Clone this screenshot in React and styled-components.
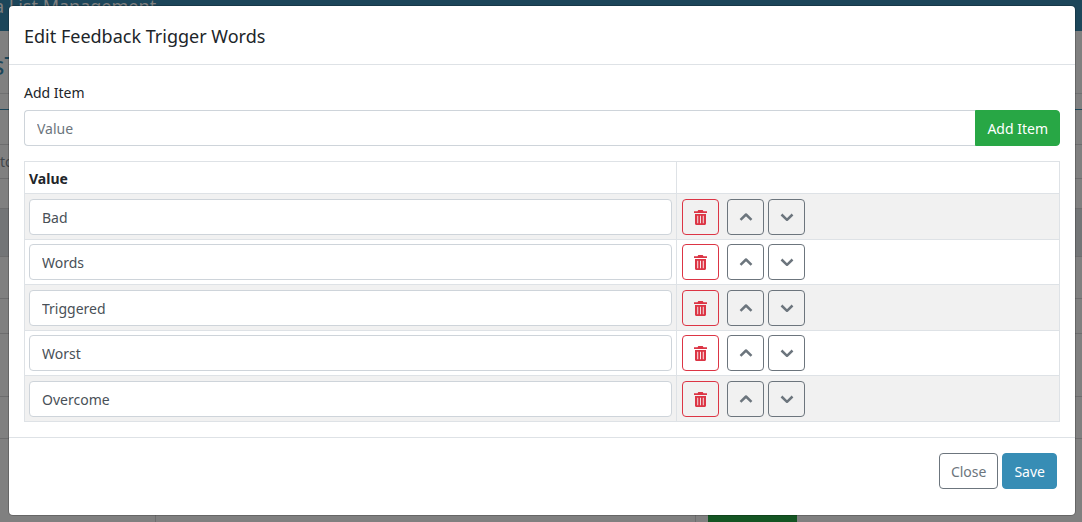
import React, { useState } from "react";
import styled, { createGlobalStyle, css } from "styled-components";

const Global = createGlobalStyle`
  *, *::before, *::after { box-sizing: border-box; }
  body {
    margin: 0;
    background: #808080;
    color: #212529;
    font-family: "Segoe UI", "Noto Sans", "Open Sans", sans-serif;
    font-size: 14px;
    line-height: 21px;
  }
  button, input { font: inherit; }
`;

const Stage = styled.div`
  position: relative;
  min-height: 100vh;
  overflow: hidden;
`;

const Backdrop = styled.div`
  position: absolute;
  inset: 0;
  overflow: hidden;
`;

const TopBar = styled.div`
  height: 31px;
  background: #1c465a;
  color: #808080;
  font-size: 18px;
  line-height: 12px;
  text-indent: -6px;
  white-space: nowrap;
`;

const PageTitle = styled.div`
  height: 63px;
  padding-top: 16px;
  border-bottom: 1px solid #6f7071;
  color: #1c465a;
  font-size: 26px;
  line-height: 36px;
  text-indent: -8px;
`;

const PageRow = styled.div`
  height: ${(p) => p.$height}px;
  border-bottom: 1px solid ${(p) => p.$line || "#6d6d6e"};
  background: ${(p) => p.$fill || "transparent"};
  color: #40464b;
  line-height: ${(p) => p.$height}px;
`;

const PageFoot = styled.div`
  display: flex;
  height: 84px;
  padding: 0 285px 0 155px;
`;

const FootCell = styled.div`
  flex: 1;
  border: 1px solid #6d6d6e;
  border-width: 0 1px;
`;

const FootAction = styled.div`
  width: 89px;
  margin-left: 12px;
  background: #145523;
`;

const Dialog = styled.section`
  position: relative;
  margin: 6px 7px 7px 9px;
  background: #fff;
  border-radius: 4px;
  box-shadow: 0 0 0 1px rgba(0, 0, 0, 0.2);
`;

const Header = styled.header`
  padding: 16px 15px 14px;
  border-bottom: 1px solid #dee2e6;
`;

const Title = styled.h1`
  margin: 0;
  font-size: 18px;
  font-weight: 400;
  line-height: 28px;
`;

const Body = styled.div`
  padding: 15px;
`;

const Label = styled.label`
  display: block;
  margin: 2px 0 7px;
`;

const TextBox = styled.input`
  display: block;
  width: 100%;
  min-width: 0;
  height: 36px;
  padding: 6px 12px;
  border: 1px solid #ced4da;
  border-radius: 4px;
  background: #fff;
  color: #495057;
  &::placeholder { color: #6c757d; opacity: 1; }
`;

const InputGroup = styled.form`
  display: flex;
  margin-bottom: 15px;
  ${TextBox} { flex: 1; border-right: 0; border-radius: 4px 0 0 4px; }
`;

const tones = {
  success: css`border-color: #28a745; background: #28a745; color: #fff;`,
  primary: css`border-color: #378db5; background: #378db5; color: #fff;`,
  secondary: css`border-color: #6c757d; color: #6c757d;`,
  danger: css`border-color: #dc3545; color: #dc3545;`,
};

const Button = styled.button`
  height: 36px;
  padding: 0 11px;
  border: 1px solid transparent;
  border-radius: 4px;
  background: transparent;
  white-space: nowrap;
  cursor: pointer;
  ${(p) => tones[p.$tone]}
`;

const AddButton = styled(Button)`
  border-radius: 0 4px 4px 0;
`;

const IconButton = styled(Button)`
  display: flex;
  align-items: center;
  justify-content: center;
  width: 37px;
  padding: 0;
  svg { display: block; }
`;

const Table = styled.table`
  width: 100%;
  border-collapse: collapse;
  th, td { border: 1px solid #dee2e6; text-align: left; }
  th { height: 32px; padding: 5px 4px 3px; font-weight: 700; }
  th:last-child { width: 37%; }
  td { padding: 4px; }
  tbody tr:nth-child(odd) { background: #f1f1f1; }
  tbody tr:nth-child(odd) td { padding-top: 5px; }
`;

const Actions = styled.div`
  display: flex;
  gap: 4px;
  padding-left: 1px;
  ${IconButton}:first-child { margin-right: 4px; }
`;

const Footer = styled.footer`
  display: flex;
  justify-content: flex-end;
  gap: 4px;
  padding: 15px 18px 26px;
  border-top: 1px solid #dee2e6;
`;

const TrashIcon = () => (
  <svg width="13" height="15" viewBox="0 0 13 15" aria-hidden="true">
    <path
      fill="currentColor"
      fillRule="evenodd"
      d="M0 1.300h3.500L4.300 0h4.400l.8 1.300H13v1.800H0zM1 4h11v9.500c0 .9-.6 1.500-1.500 1.500h-8C1.600 15 1 14.400 1 13.500zM3.300 5.700v7.600h.9V5.700zM6.050 5.700v7.600h.9V5.700zM8.800 5.700v7.600h.9V5.700z"
    />
  </svg>
);

const Chevron = ({ down }) => (
  <svg width="14" height="10" viewBox="0 0 14 10" fill="none" aria-hidden="true">
    <path
      d={down ? "M1.500 2.500L7 7.800L12.500 2.500" : "M1.500 7.800L7 2.500L12.500 7.800"}
      stroke="currentColor"
      strokeWidth="2.500"
      strokeLinejoin="round"
    />
  </svg>
);

export default function App() {
  const [items, setItems] = useState(["Bad", "Words", "Triggered", "Worst", "Overcome"]);
  const [draft, setDraft] = useState("");

  const add = (e) => {
    e.preventDefault();
    if (draft.trim()) setItems([...items, draft.trim()]);
    setDraft("");
  };
  const edit = (i, value) => setItems(items.map((v, n) => (n === i ? value : v)));
  const remove = (i) => setItems(items.filter((_, n) => n !== i));
  const move = (i, to) => {
    if (to < 0 || to >= items.length) return;
    const next = [...items];
    [next[i], next[to]] = [next[to], next[i]];
    setItems(next);
  };

  return (
    <Stage>
      <Global />
      <Backdrop aria-hidden="true">
        <TopBar>a List Management</TopBar>
        <PageTitle>sT</PageTitle>
        <PageRow $height={16} $line="#1c465a" />
        <PageRow $height={35} />
        <PageRow $height={34}>to</PageRow>
        <PageRow $height={30} />
        <PageRow $height={48} $fill="#737577" />
        <PageRow $height={42} />
        <PageRow $height={35} />
        <PageRow $height={63} />
        <PageRow $height={42} />
        <PageFoot>
          <FootCell />
          <FootAction />
        </PageFoot>
      </Backdrop>
      <Dialog role="dialog" aria-labelledby="dialog-title">
        <Header>
          <Title id="dialog-title">Edit Feedback Trigger Words</Title>
        </Header>
        <Body>
          <Label htmlFor="new-item">Add Item</Label>
          <InputGroup onSubmit={add}>
            <TextBox id="new-item" placeholder="Value" value={draft} onChange={(e) => setDraft(e.target.value)} />
            <AddButton $tone="success" type="submit">Add Item</AddButton>
          </InputGroup>
          <Table>
            <thead>
              <tr>
                <th scope="col">Value</th>
                <th scope="col" aria-label="Actions" />
              </tr>
            </thead>
            <tbody>
              {items.map((item, i) => (
                <tr key={i}>
                  <td>
                    <TextBox aria-label={`Value ${i + 1}`} value={item} onChange={(e) => edit(i, e.target.value)} />
                  </td>
                  <td>
                    <Actions>
                      <IconButton $tone="danger" type="button" aria-label="Delete" onClick={() => remove(i)}><TrashIcon /></IconButton>
                      <IconButton $tone="secondary" type="button" aria-label="Move up" onClick={() => move(i, i - 1)}><Chevron /></IconButton>
                      <IconButton $tone="secondary" type="button" aria-label="Move down" onClick={() => move(i, i + 1)}><Chevron down /></IconButton>
                    </Actions>
                  </td>
                </tr>
              ))}
            </tbody>
          </Table>
        </Body>
        <Footer>
          <Button $tone="secondary" type="button">Close</Button>
          <Button $tone="primary" type="button">Save</Button>
        </Footer>
      </Dialog>
    </Stage>
  );
}
